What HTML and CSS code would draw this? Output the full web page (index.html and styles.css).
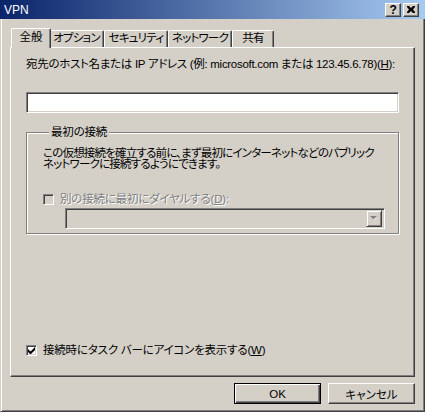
FILE: index.html
```html
<!DOCTYPE html>
<html lang="ja">
<head>
    <meta charset="UTF-8">
    <title>VPN</title>
    <link rel="stylesheet" href="styles.css">
</head>
<body>
    <div class="window">
        <!-- Title bar -->
        <div class="titlebar">
            <span class="title">VPN</span>
            <div class="caption-buttons">
                <span class="caption-btn help">?</span>
                <span class="caption-btn">
                    <svg width="8" height="7" viewBox="0 0 8 7">
                        <path d="M0 0h2l2 2 2-2h2v1L6 3.5 8 6v1H6L4 5 2 7H0V6l2-2.5L0 1z" fill="#000"/>
                    </svg>
                </span>
            </div>
        </div>

        <div class="client">
            <!-- Tabs -->
            <div class="tabs">
                <div class="tab selected w-general">全般</div>
                <div class="tab w-options">オプション</div>
                <div class="tab w-security">セキュリティ</div>
                <div class="tab w-network">ネットワーク</div>
                <div class="tab w-sharing">共有</div>
            </div>

            <div class="panel">
                <p class="label">宛先のホスト名または IP アドレス (例: microsoft.com または 123.45.6.78)(<u>H</u>):</p>
                <div class="edit"></div>

                <fieldset class="group">
                    <legend>最初の接続</legend>
                    <p class="group-text">この仮想接続を確立する前に、まず最初にインターネットなどのパブリック<br>ネットワークに接続するようにできます。</p>
                    <div class="check disabled">
                        <span class="box"></span>
                        <span>別の接続に最初にダイヤルする(<u>D</u>):</span>
                    </div>
                    <div class="combo">
                        <span class="combo-btn">
                            <svg width="8" height="5" viewBox="0 0 8 5">
                                <path d="M1 1h6L4 4z" fill="#fff"/>
                                <path d="M0 0h7L3.5 3.5z" fill="#808080"/>
                            </svg>
                        </span>
                    </div>
                </fieldset>

                <div class="check bottom-check">
                    <span class="box">
                        <svg width="7" height="7" viewBox="0 0 7 7">
                            <path d="M0 2v3l2 2h1l4-4V0L2.5 4.5z" fill="#000"/>
                        </svg>
                    </span>
                    <span>接続時にタスク バーにアイコンを表示する(<u>W</u>)</span>
                </div>
            </div>

            <!-- Dialog buttons -->
            <div class="buttons">
                <button class="btn default">OK</button>
                <button class="btn">キャンセル</button>
            </div>
        </div>
    </div>
</body>
</html>
```

FILE: styles.css
```css
body {
    margin: 0;
    font-family: "Liberation Sans", "Noto Sans CJK JP", sans-serif;
    font-size: 11.5px;
    font-feature-settings: "palt";
    letter-spacing: -0.2px;
    white-space: nowrap;
    color: #000;
    background: #d4d0c8;
}

.window {
    width: 425px;
    height: 412px;
    background: #d4d0c8;
    display: flex;
    flex-direction: column;
}

/* title bar with the classic blue gradient */
.titlebar {
    height: 19px;
    flex: none;
    display: flex;
    align-items: center;
    justify-content: space-between;
    padding: 0 6px 0 4px;
    background: linear-gradient(to right, #0a246a, #a6caf0);
    color: #fff;
}

.title {
    font-size: 12px;
    line-height: 12px;
    letter-spacing: 0;
}

.caption-buttons {
    display: flex;
    gap: 2px;
}

.caption-btn {
    box-sizing: border-box;
    width: 16px;
    height: 14px;
    display: flex;
    align-items: center;
    justify-content: center;
    background: #d4d0c8;
    border: 1px solid;
    border-color: #fff #404040 #404040 #fff;
    box-shadow: inset -1px -1px #808080;
    color: #000;
}

.caption-btn.help {
    font-weight: bold;
    font-size: 12px;
    line-height: 12px;
}

.client {
    flex: 1;
    display: flex;
    flex-direction: column;
    padding: 9px 9px 7px 9px;
    border: solid;
    border-width: 0 1px 1px 1px;
    border-color: #d4d0c8 #404040 #404040 #d4d0c8;
    box-shadow: inset 1px 0 #fff, inset -1px -1px #808080;
}

/* tabs */
.tabs {
    display: flex;
    align-items: flex-end;
    height: 19px;
    padding-left: 3px;
}

.tab {
    box-sizing: border-box;
    height: 17px;
    line-height: 15px;
    text-align: center;
    letter-spacing: -0.8px;
    border: 1px solid;
    border-bottom: none;
    border-color: #fff #404040 #fff #fff;
    border-radius: 2px 2px 0 0;
    box-shadow: inset -1px 0 #808080;
}

.tab.selected {
    position: relative;
    z-index: 2;
    height: 20px;
    margin: 0 -2px -1px -2px;
    background: #d4d0c8;
    line-height: 16px;
    letter-spacing: 0;
}

.w-general { width: 40px; }
.w-options { width: 55px; }
.w-security { width: 64px; }
.w-network { width: 64px; }
.w-sharing { width: 42px; }

.panel {
    flex: 1;
    display: flex;
    flex-direction: column;
    padding: 10px 15px 20px 15px;
    border: 1px solid;
    border-color: #fff #404040 #404040 #fff;
    box-shadow: inset -1px -1px #808080;
}

p {
    margin: 0;
}

.label {
    line-height: 12px;
    letter-spacing: -0.3px;
}

u {
    text-decoration-thickness: 1px;
    text-underline-offset: 1px;
}

.edit {
    box-sizing: border-box;
    height: 21px;
    margin-top: 22px;
    background: #fff;
    border: 1px solid;
    border-color: #808080 #fff #fff #808080;
    box-shadow: inset 1px 1px #404040, inset -1px -1px #d4d0c8;
}

/* etched group box */
.group {
    min-width: 0;
    margin: 13px 0 0 0;
    padding: 0 13px 10px 16px;
    height: 108px;
    box-sizing: border-box;
    border: 1px solid #808080;
    box-shadow: inset 1px 1px #fff, 1px 1px #fff;
}

.group legend {
    margin-left: 6px;
    padding: 0 2px;
    line-height: 12px;
    background: #d4d0c8;
}

.group-text {
    margin-top: 10px;
    line-height: 11px;
    letter-spacing: -0.8px;
}

.check {
    display: flex;
    align-items: center;
    gap: 6px;
    line-height: 12px;
}

.check .box {
    box-sizing: border-box;
    width: 11px;
    height: 11px;
    display: flex;
    align-items: center;
    justify-content: center;
    background: #fff;
    border: 1px solid;
    border-color: #808080 #fff #fff #808080;
    box-shadow: inset 1px 1px #404040, inset -1px -1px #d4d0c8;
}

.check.disabled {
    margin-top: 23px;
    color: #808080;
    text-shadow: 1px 1px 0 #fff;
}

.check.disabled .box {
    background: #d4d0c8;
}

.combo {
    box-sizing: border-box;
    height: 21px;
    margin: 3px 0 0 22px;
    display: flex;
    justify-content: flex-end;
    align-items: center;
    padding-right: 2px;
    background: #d4d0c8;
    border: 1px solid;
    border-color: #808080 #fff #fff #808080;
    box-shadow: inset 1px 1px #404040, inset -1px -1px #d4d0c8;
}

.combo-btn {
    box-sizing: border-box;
    width: 16px;
    height: 17px;
    display: flex;
    align-items: center;
    justify-content: center;
    border: 1px solid;
    border-color: #d4d0c8 #404040 #404040 #d4d0c8;
    box-shadow: inset 1px 1px #fff, inset -1px -1px #808080;
}

.bottom-check {
    margin-top: auto;
}

.buttons {
    display: flex;
    justify-content: flex-end;
    gap: 7px;
    margin-top: 6px;
}

.btn {
    box-sizing: border-box;
    width: 87px;
    height: 21px;
    padding: 0;
    font: inherit;
    letter-spacing: 0;
    color: #000;
    background: #d4d0c8;
    border: 1px solid;
    border-color: #fff #404040 #404040 #fff;
    box-shadow: inset -1px -1px #808080;
}

.btn.default {
    border-color: #000;
    box-shadow: inset 1px 1px #fff, inset -1px -1px #404040, inset -2px -2px #808080;
}
```
